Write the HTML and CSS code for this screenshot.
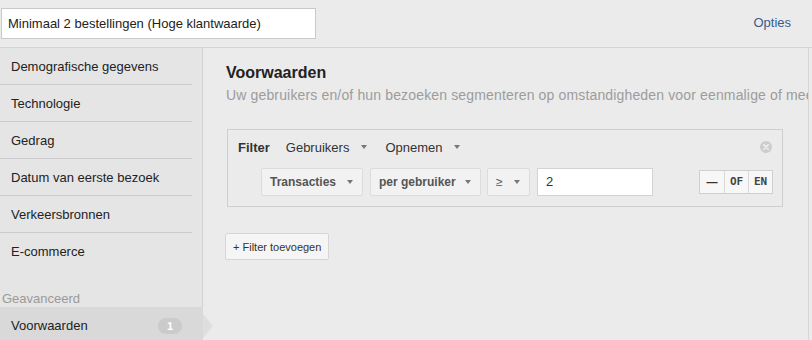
FILE: index.html
```html
<!DOCTYPE html>
<html lang="nl">
<head>
  <meta charset="UTF-8" />
  <title>Segment bewerken</title>
  <link rel="stylesheet" href="styles.css">
</head>
<body>
  <header class="topbar">
    <div class="segment-naam">Minimaal 2 bestellingen (Hoge klantwaarde)</div>
    <a class="opties" href="#">Opties</a>
  </header>

  <div class="layout">
    <aside class="sidebar">
      <ul class="menu">
        <li>Demografische gegevens</li>
        <li>Technologie</li>
        <li>Gedrag</li>
        <li>Datum van eerste bezoek</li>
        <li>Verkeersbronnen</li>
        <li class="laatste">E-commerce</li>
      </ul>
      <div class="menu-kop">Geavanceerd</div>
      <div class="menu-actief">
        <span>Voorwaarden</span>
        <span class="badge">1</span>
      </div>
    </aside>

    <main class="inhoud">
      <h2>Voorwaarden</h2>
      <p class="uitleg">Uw gebruikers en/of hun bezoeken segmenteren op omstandigheden voor eenmalige of meerdere sessies.</p>

      <div class="filter">
        <div class="filter-kop">
          <strong>Filter</strong>
          <span class="keuze">Gebruikers <i class="pijl"></i></span>
          <span class="keuze">Opnemen <i class="pijl"></i></span>
          <span class="sluiten">
            <svg width="12" height="12" viewBox="0 0 12 12">
              <circle cx="6" cy="6" r="6" fill="#cdcdcd" />
              <path d="M3.8 3.8 L8.2 8.2 M8.2 3.8 L3.8 8.2" stroke="#f2f2f2" stroke-width="1.6" stroke-linecap="round" />
            </svg>
          </span>
        </div>
        <div class="filter-regel">
          <span class="knop knop-transacties">Transacties <i class="pijl"></i></span>
          <span class="knop knop-per">per gebruiker <i class="pijl"></i></span>
          <span class="knop knop-op">&ge; <i class="pijl"></i></span>
          <div class="waarde">2</div>
          <div class="logica">
            <span class="min">&mdash;</span>
            <span>OF</span>
            <span>EN</span>
          </div>
        </div>
      </div>

      <button class="toevoegen">+ Filter toevoegen</button>
    </main>
  </div>
</body>
</html>
```

FILE: styles.css
```css
* { margin: 0; padding: 0; box-sizing: border-box; }

html, body {
  width: 812px;
  height: 340px;
  overflow: hidden;
}

body {
  background: #ebebeb;
  font-family: 'Liberation Sans', Arial, sans-serif;
  font-size: 13px;
  color: #222;
}

.topbar {
  height: 48px;
  border-bottom: 1px solid #d4d4d4;
  display: flex;
  align-items: center;
  justify-content: space-between;
  padding: 0 21px 0 1px;
}

.segment-naam {
  width: 315px;
  height: 31px;
  background: #fff;
  border: 1px solid #c9c9c9;
  padding-left: 6px;
  line-height: 29px;
  color: #222;
  margin-top: -1px;
}

.opties {
  color: #3b5b8c;
  text-decoration: none;
  margin-top: -3px;
}

.layout {
  display: flex;
  height: 292px;
}

.sidebar {
  width: 203px;
  flex-shrink: 0;
  background: #e5e5e5;
  border-right: 1px solid #d2d2d2;
  position: relative;
}

.menu {
  list-style: none;
}

.menu li {
  height: 37px;
  line-height: 37px;
  margin-right: 10px;
  padding-left: 11px;
  border-bottom: 1px solid #cbcbcb;
}

.menu li.laatste {
  border-bottom: none;
  height: 36px;
}

.menu-kop {
  padding: 22px 0 0 2px;
  line-height: 16px;
  height: 38px;
  color: #9a9a9a;
}

.menu-actief {
  position: relative;
  height: 37px;
  margin-right: -1px;
  background: #d9d9d9;
  display: flex;
  align-items: center;
  justify-content: space-between;
  padding: 0 21px 0 11px;
}

.menu-actief::after {
  content: '';
  position: absolute;
  right: -10px;
  top: 7px;
  border-top: 12px solid transparent;
  border-bottom: 12px solid transparent;
  border-left: 10px solid #dedede;
}

.badge {
  width: 24px;
  height: 16px;
  border-radius: 8px;
  background: #cbcbcb;
  color: #fff;
  font-size: 11px;
  font-weight: bold;
  text-align: center;
  line-height: 16px;
}

.inhoud {
  width: 606px;
  flex-shrink: 0;
  border-right: 1px solid #d6d6d6;
  padding: 16px 0 0 23px;
  overflow: hidden;
  white-space: nowrap;
}

.inhoud h2 {
  font-size: 16px;
  line-height: 18px;
  color: #222;
}

.uitleg {
  margin-top: 4px;
  font-size: 14px;
  letter-spacing: 0.15px;
  line-height: 18px;
  color: #9c9c9c;
}

.filter {
  margin: 25px 0 0 1px;
  width: 556px;
  border: 1px solid #cecece;
  padding: 9px 9px 10px 10px;
}

.filter-kop {
  display: flex;
  align-items: center;
  height: 16px;
  color: #333;
}

.filter-kop strong {
  margin-right: 16px;
}

.keuze {
  display: inline-flex;
  align-items: center;
  margin-right: 18px;
}

.keuze .pijl {
  margin-left: 12px;
}

.pijl {
  display: inline-block;
  width: 0;
  height: 0;
  border-left: 3.5px solid transparent;
  border-right: 3.5px solid transparent;
  border-top: 4px solid #777;
}

.sluiten {
  margin-left: auto;
  margin-right: 1px;
  display: flex;
}

.filter-regel {
  display: flex;
  align-items: center;
  margin-top: 13px;
  padding-left: 23px;
  height: 28px;
}

.knop {
  height: 28px;
  background: #f2f2f2;
  border: 1px solid #dcdcdc;
  border-radius: 2px;
  display: flex;
  align-items: center;
  justify-content: space-between;
  padding: 0 9px 0 8px;
  font-size: 12px;
  font-weight: bold;
  color: #555;
  margin-right: 6px;
}

.knop-transacties { width: 102px; margin-right: 7px; }
.knop-per { width: 111px; }
.knop-op { width: 43px; margin-right: 7px; font-weight: normal; }

.waarde {
  width: 116px;
  height: 28px;
  background: #fff;
  border: 1px solid #d3d3d3;
  padding-left: 8px;
  line-height: 26px;
  color: #333;
}

.logica {
  margin-left: auto;
  display: flex;
  height: 24px;
  border: 1px solid #cfcfcf;
  background: #f7f7f7;
}

.logica span {
  width: 24px;
  text-align: center;
  line-height: 22px;
  font-family: 'DejaVu Sans Mono', 'Liberation Mono', monospace;
  font-size: 11px;
  font-weight: bold;
  color: #444;
  border-left: 1px solid #dadada;
}

.logica span.min {
  border-left: none;
  font-family: 'Liberation Sans', Arial, sans-serif;
  color: #333;
}

.toevoegen {
  margin: 26px 0 0 -1px;
  height: 27px;
  padding: 0 7px;
  background: #f5f5f5;
  border: 1px solid #d6d6d6;
  border-radius: 2px;
  font-family: 'Liberation Sans', Arial, sans-serif;
  font-size: 11px;
  color: #333;
  cursor: pointer;
}
```
